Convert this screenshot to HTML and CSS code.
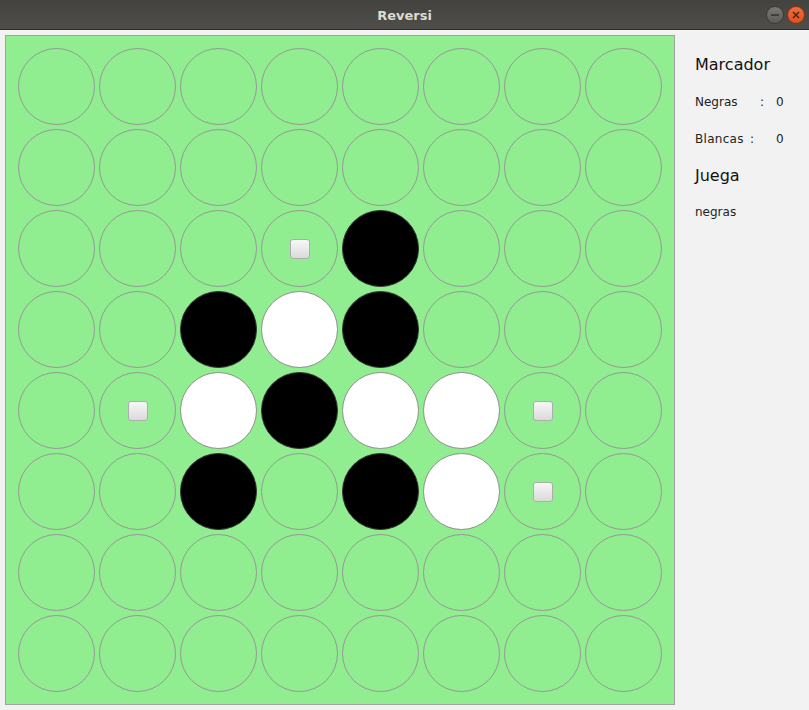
FILE: index.html
```html
<!DOCTYPE html>
<html lang="es">
<head>
<meta charset="utf-8">
<title>Reversi</title>
<link rel="stylesheet" href="styles.css">
</head>
<body>
<div class="titlebar">
  <span class="title">Reversi</span>
  <div class="controls">
    <span class="btn min"><svg width="18" height="18" viewBox="0 0 18 18"><line x1="5" y1="9" x2="13" y2="9" stroke="#2f2f2c" stroke-width="1.4"/></svg></span>
    <span class="btn close"><svg width="18" height="18" viewBox="0 0 18 18"><path d="M6 6 L12 12 M12 6 L6 12" stroke="#3a2418" stroke-width="1.4"/></svg></span>
  </div>
</div>
<div class="main">
  <div class="board">
    <div class="cell"><div class="disc"></div></div><div class="cell"><div class="disc"></div></div><div class="cell"><div class="disc"></div></div><div class="cell"><div class="disc"></div></div><div class="cell"><div class="disc"></div></div><div class="cell"><div class="disc"></div></div><div class="cell"><div class="disc"></div></div><div class="cell"><div class="disc"></div></div>
    <div class="cell"><div class="disc"></div></div><div class="cell"><div class="disc"></div></div><div class="cell"><div class="disc"></div></div><div class="cell"><div class="disc"></div></div><div class="cell"><div class="disc"></div></div><div class="cell"><div class="disc"></div></div><div class="cell"><div class="disc"></div></div><div class="cell"><div class="disc"></div></div>
    <div class="cell"><div class="disc"></div></div><div class="cell"><div class="disc"></div></div><div class="cell"><div class="disc"></div></div><div class="cell"><div class="disc"><span class="hint"></span></div></div><div class="cell"><div class="disc black"></div></div><div class="cell"><div class="disc"></div></div><div class="cell"><div class="disc"></div></div><div class="cell"><div class="disc"></div></div>
    <div class="cell"><div class="disc"></div></div><div class="cell"><div class="disc"></div></div><div class="cell"><div class="disc black"></div></div><div class="cell"><div class="disc white"></div></div><div class="cell"><div class="disc black"></div></div><div class="cell"><div class="disc"></div></div><div class="cell"><div class="disc"></div></div><div class="cell"><div class="disc"></div></div>
    <div class="cell"><div class="disc"></div></div><div class="cell"><div class="disc"><span class="hint"></span></div></div><div class="cell"><div class="disc white"></div></div><div class="cell"><div class="disc black"></div></div><div class="cell"><div class="disc white"></div></div><div class="cell"><div class="disc white"></div></div><div class="cell"><div class="disc"><span class="hint"></span></div></div><div class="cell"><div class="disc"></div></div>
    <div class="cell"><div class="disc"></div></div><div class="cell"><div class="disc"></div></div><div class="cell"><div class="disc black"></div></div><div class="cell"><div class="disc"></div></div><div class="cell"><div class="disc black"></div></div><div class="cell"><div class="disc white"></div></div><div class="cell"><div class="disc"><span class="hint"></span></div></div><div class="cell"><div class="disc"></div></div>
    <div class="cell"><div class="disc"></div></div><div class="cell"><div class="disc"></div></div><div class="cell"><div class="disc"></div></div><div class="cell"><div class="disc"></div></div><div class="cell"><div class="disc"></div></div><div class="cell"><div class="disc"></div></div><div class="cell"><div class="disc"></div></div><div class="cell"><div class="disc"></div></div>
    <div class="cell"><div class="disc"></div></div><div class="cell"><div class="disc"></div></div><div class="cell"><div class="disc"></div></div><div class="cell"><div class="disc"></div></div><div class="cell"><div class="disc"></div></div><div class="cell"><div class="disc"></div></div><div class="cell"><div class="disc"></div></div><div class="cell"><div class="disc"></div></div>
  </div>
  <div class="side">
    <div class="heading first">Marcador</div>
    <div class="score"><span class="name negras">Negras</span><span class="colon">:</span><span class="num">0</span></div>
    <div class="score second"><span class="name blancas">Blancas</span><span class="colon wide">:</span><span class="num">0</span></div>
    <div class="heading juega">Juega</div>
    <div class="turn">negras</div>
  </div>
</div>
</body>
</html>
```
FILE: styles.css
```css
* { box-sizing: border-box; }
html, body { margin: 0; padding: 0; }
body {
  width: 809px;
  height: 710px;
  overflow: hidden;
  background: #f2f2f2;
  font-family: "DejaVu Sans", sans-serif;
  color: #1a1a1a;
}
.titlebar {
  height: 30px;
  background: linear-gradient(#43423e, #504e49);
  border-bottom: 1px solid #2e2d2a;
  display: flex;
  align-items: center;
  justify-content: center;
  position: relative;
}
.title {
  font-weight: bold;
  font-size: 13px;
  color: #dfdbd2;
  margin-top: 1px;
}
.controls {
  position: absolute;
  right: 4px;
  top: 6px;
  display: flex;
  gap: 3px;
}
.btn {
  width: 18px;
  height: 18px;
  border-radius: 50%;
  display: flex;
}
.btn.min { background: linear-gradient(#7a7974, #5c5b57); border: 1px solid #3b3a37; }
.btn.close { background: linear-gradient(#f26b3a, #e0501c); border: 1px solid #8a3414; }
.btn svg { margin: -1px; }
.main {
  display: flex;
  padding: 5px 0 0 5px;
}
.board {
  width: 670px;
  height: 670px;
  background: #90ee90;
  border: 1px solid #a3a3a3;
  padding: 10px;
  display: grid;
  grid-template-columns: repeat(8, 81px);
  grid-template-rows: repeat(8, 81px);
}
.cell {
  display: flex;
  align-items: center;
  justify-content: center;
}
.disc {
  width: 77px;
  height: 77px;
  border-radius: 50%;
  border: 1px solid #979797;
  display: flex;
  align-items: center;
  justify-content: center;
}
.disc.black { background: #000; border-color: #333; }
.disc.white { background: #fff; border-color: #8f8f8f; }
.hint {
  width: 20px;
  height: 20px;
  border-radius: 3px;
  border: 1px solid #adadad;
  background: linear-gradient(#f7f7f7, #dadada);
}
.side {
  display: flex;
  flex-direction: column;
  padding-left: 20px;
  width: 134px;
}
.heading {
  font-size: 16px;
  line-height: 20px;
  color: #111;
}
.heading.first { margin-top: 20px; }
.heading.juega { margin-top: 19px; }
.score {
  display: flex;
  font-size: 12px;
  line-height: 16px;
  color: #222;
  margin-top: 19px;
}
.score.second { margin-top: 21px; }
.name.negras { width: 65px; }
.name.blancas { width: 55px; letter-spacing: 0.3px; }
.colon { width: 16px; }
.colon.wide { width: 26px; }
.turn {
  font-size: 12px;
  line-height: 16px;
  color: #222;
  margin-top: 18px;
}
```
